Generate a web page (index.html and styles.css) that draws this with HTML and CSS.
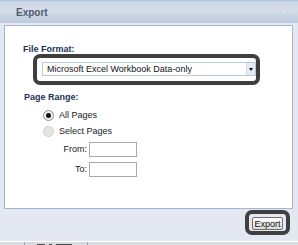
FILE: index.html
```html
<!DOCTYPE html>
<html lang="en">
<head>
    <meta charset="UTF-8">
    <title>Export</title>
    <link rel="stylesheet" href="styles.css">
</head>
<body>
    <!-- Export dialog -->
    <div class="dialog">
        <div class="title-bar">
            <span class="title">Export</span>
            <span class="close">&#x2715;</span>
        </div>

        <div class="panel">
            <div class="field-label">File Format:</div>
            <div class="highlight format-box">
                <div class="select">
                    <span class="select-text">Microsoft Excel Workbook Data-only</span>
                    <span class="select-arrow"></span>
                </div>
            </div>

            <div class="field-label range-label">Page Range:</div>
            <div class="radios">
                <div class="radio-row"><span class="radio checked"></span>All Pages</div>
                <div class="radio-row"><span class="radio disabled"></span>Select Pages</div>
            </div>

            <div class="range-row"><span class="range-name">From:</span><span class="text-input"></span></div>
            <div class="range-row"><span class="range-name">To:</span><span class="text-input"></span></div>
        </div>

        <div class="button-bar">
            <div class="highlight button-box">
                <button class="export-button">Export</button>
            </div>
        </div>
    </div>

    <!-- edge of the page behind the dialog -->
    <div class="page-strip">
        <span class="strip-cell"></span>
        <span class="strip-cell"><i class="mark"></i><i class="mark short"></i><i class="mark long"></i></span>
        <span class="strip-cell wide"></span>
    </div>
</body>
</html>
```

FILE: styles.css
```css
body {
    margin: 0;
    width: 298px;
    height: 245px;
    overflow: hidden;
    background-color: #e3e8f2;
    font-family: "Liberation Sans", Arial, sans-serif;
    font-size: 9px;
    color: #222;
}

.dialog {
    height: 241px;
    display: flex;
    flex-direction: column;
    border-bottom: 1px solid #ffffff;
}

/* Header */
.title-bar {
    height: 23px;
    display: flex;
    align-items: center;
    justify-content: space-between;
    padding: 0 9px 0 16px;
    background: linear-gradient(#c9d5e5, #d4dde9 40%, #bccadc);
    border-top: 1px solid #b3c3d9;
    box-sizing: border-box;
}

.title {
    font-weight: bold;
    font-size: 10px;
    color: #4e5c6f;
}

.close {
    font-size: 9px;
    color: #f4f6f9;
    text-shadow: 0 0 1px #8b98aa;
}

.panel {
    height: 184px;
    margin: 2px 5px 0 4px;
    padding: 18px 0 0 18px;
    box-sizing: border-box;
    background-color: white;
    border: 1px solid #a4b5d0;
}

.field-label {
    font-weight: bold;
    color: #1d3356;
    line-height: 10px;
}

/* thick dark rounded outline drawn round a control */
.highlight {
    border: 4px solid #3f3f3f;
    border-radius: 7px;
    box-sizing: border-box;
}

.format-box {
    width: 227px;
    height: 31px;
    margin-left: 10px;
    padding: 4px 0 5px 5px;
}

.select {
    height: 14px;
    display: flex;
    align-items: center;
    background-color: white;
    border: 1px solid #b9c8df;
    box-sizing: border-box;
}

.select-text {
    flex: 1;
    padding-left: 4px;
    font-size: 9px;
    color: #111;
}

.select-arrow {
    width: 8px;
    height: 12px;
    background-color: #e6eaf1;
    border-left: 1px solid #d3dbe7;
    position: relative;
}

.select-arrow::after {
    content: "";
    position: absolute;
    left: 2px;
    top: 5px;
    border-left: 2px solid transparent;
    border-right: 2px solid transparent;
    border-top: 3px solid #111;
}

.range-label {
    margin: 7px 0 0 1px;
}

.radios {
    margin-top: 5px;
}

.radio-row {
    height: 16px;
    display: flex;
    align-items: center;
    gap: 5px;
    padding-left: 20px;
    color: #1a1a1a;
}

.radio {
    width: 11px;
    height: 11px;
    border-radius: 50%;
    box-sizing: border-box;
    display: flex;
    align-items: center;
    justify-content: center;
}

.radio.checked {
    border: 1px solid #8d8d8d;
    background: radial-gradient(#ffffff, #e8e8e8);
}

.radio.checked::after {
    content: "";
    width: 5px;
    height: 5px;
    border-radius: 50%;
    background-color: #111;
}

.radio.disabled {
    border: 1px solid #cfcfcf;
    background-color: #e4e4e4;
}

.range-row {
    height: 20px;
    display: flex;
    align-items: center;
    gap: 2px;
}

.range-name {
    width: 64px;
    text-align: right;
    color: #1a1a1a;
}

.text-input {
    width: 48px;
    height: 15px;
    box-sizing: border-box;
    background-color: white;
    border: 1px solid #a9a9a9;
}

/* Footer with export button */
.button-bar {
    display: flex;
    justify-content: flex-end;
    padding: 1px 8px 0 0;
}

.button-box {
    width: 45px;
    height: 25px;
    padding: 3px;
}

.export-button {
    width: 31px;
    height: 13px;
    padding: 0;
    font-family: "Liberation Sans", Arial, sans-serif;
    font-size: 9px;
    line-height: 10px;
    color: #111;
    background: linear-gradient(#ffffff, #dadada);
    border: 1px solid #6e6e6e;
    border-radius: 2px;
}

.page-strip {
    height: 4px;
    display: flex;
    background-color: #d7dade;
}

.strip-cell {
    width: 24px;
    display: flex;
    gap: 4px;
    padding: 2px 0 0 12px;
    border-left: 1px solid #9aa0a8;
}

.strip-cell:first-child {
    border-left: none;
    padding-left: 0;
}

.strip-cell:nth-child(2) {
    width: 50px;
}

.strip-cell.wide {
    width: 140px;
}

.mark {
    width: 8px;
    height: 2px;
    background-color: #4a4a4a;
}

.mark.short {
    width: 3px;
}

.mark.long {
    width: 16px;
}
```
